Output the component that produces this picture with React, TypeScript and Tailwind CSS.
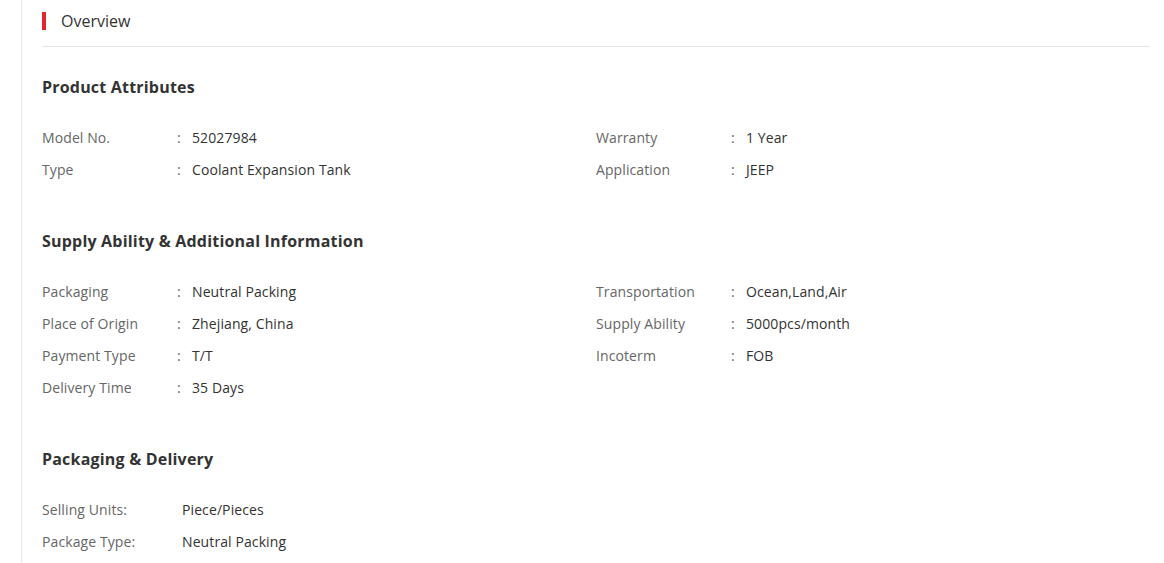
const productAttrs: [string, string][][] = [
  [
    ['Model No.', '52027984'],
    ['Type', 'Coolant Expansion Tank'],
  ],
  [
    ['Warranty', '1 Year'],
    ['Application', 'JEEP'],
  ],
];

const supplyAttrs: [string, string][][] = [
  [
    ['Packaging', 'Neutral Packing'],
    ['Place of Origin', 'Zhejiang, China'],
    ['Payment Type', 'T/T'],
    ['Delivery Time', '35 Days'],
  ],
  [
    ['Transportation', 'Ocean,Land,Air'],
    ['Supply Ability', '5000pcs/month'],
    ['Incoterm', 'FOB'],
  ],
];

const delivery: [string, string][] = [
  ['Selling Units:', 'Piece/Pieces'],
  ['Package Type:', 'Neutral Packing'],
];

function AttrRow({ label, value }: { label: string; value: string }) {
  return (
    <div className="flex h-8 items-center text-[14px] tracking-[0.1px]">
      <span className="w-[135px] shrink-0 text-[#666]">{label}</span>
      <span className="w-[15px] shrink-0 text-[#666]">:</span>
      <span className="text-[#333]">{value}</span>
    </div>
  );
}

function Section({ title, cols }: { title: string; cols: [string, string][][] }) {
  return (
    <section className="mb-[44px]">
      <h2 className="h-6 text-[16px] font-bold leading-6 tracking-[0.2px] text-[#333]">{title}</h2>
      <div className="mt-[22px] grid grid-cols-2">
        {cols.map((col, i) => (
          <div key={i}>
            {col.map(([l, v]) => (
              <AttrRow key={l} label={l} value={v} />
            ))}
          </div>
        ))}
      </div>
    </section>
  );
}

export default function App() {
  return (
    <div
      className="min-h-screen bg-white"
      style={{ fontFamily: '"Open Sans", "Noto Sans", sans-serif' }}
    >
      <div className="ml-[21px] min-h-screen border-l border-[#e8e8e8] pl-[20px] pr-[14px]">
        {/* Header */}
        <div className="flex h-[47px] items-center border-b border-[#e5e5e5] pb-[5px]">
          <div className="h-[18px] w-[4px] bg-[#e3262b]" />
          <span className="ml-[15px] text-[16px] text-[#333]">Overview</span>
        </div>

        <div className="pt-[28px]">
          <Section title="Product Attributes" cols={productAttrs} />
          <Section title="Supply Ability & Additional Information" cols={supplyAttrs} />

          <section>
            <h2 className="h-6 text-[16px] font-bold leading-6 tracking-[0.2px] text-[#333]">Packaging &amp; Delivery</h2>
            <div className="mt-[22px]">
              {delivery.map(([l, v]) => (
                <div key={l} className="flex h-8 items-center text-[14px] tracking-[0.1px]">
                  <span className="w-[140px] shrink-0 text-[#666]">{l}</span>
                  <span className="text-[#333]">{v}</span>
                </div>
              ))}
            </div>
          </section>
        </div>
      </div>
    </div>
  );
}
